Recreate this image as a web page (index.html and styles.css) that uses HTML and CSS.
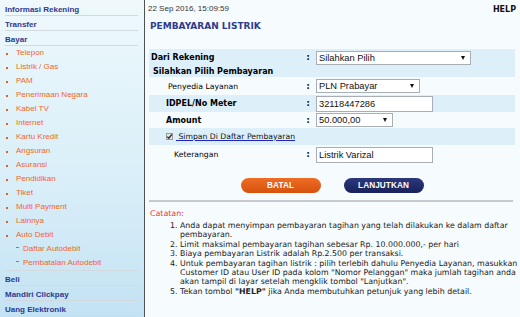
FILE: index.html
```html
<!DOCTYPE html>
<html lang="id">
<head>
<meta charset="utf-8">
<title>Pembayaran Listrik</title>
<link rel="stylesheet" href="styles.css">
</head>
<body>
<div class="page">
  <aside class="side">
    <ul class="menu">
      <li class="head">Informasi Rekening</li>
      <li class="head">Transfer</li>
      <li class="head">Bayar</li>
      <li>
        <ul class="sub">
          <li class="item">Telepon</li>
          <li class="item">Listrik / Gas</li>
          <li class="item">PAM</li>
          <li class="item">Penerimaan Negara</li>
          <li class="item">Kabel TV</li>
          <li class="item">Internet</li>
          <li class="item">Kartu Kredit</li>
          <li class="item">Angsuran</li>
          <li class="item">Asuransi</li>
          <li class="item">Pendidikan</li>
          <li class="item">Tiket</li>
          <li class="item">Multi Payment</li>
          <li class="item">Lainnya</li>
          <li class="item item-active">Auto Debit</li>
          <li class="subitem">Daftar Autodebit</li>
          <li class="subitem">Pembatalan Autodebit</li>
        </ul>
      </li>
      <li class="head">Beli</li>
      <li class="head">Mandiri Clickpay</li>
      <li class="head">Uang Elektronik</li>
    </ul>
  </aside>

  <main class="main">
    <div class="topbar">
      <span class="date">22 Sep 2016, 15:09:59</span>
      <span class="help">HELP</span>
    </div>
    <h1 class="title">PEMBAYARAN LISTRIK</h1>

    <div class="form">
      <div class="row band row-dari">
        <div class="label bold pad-dari">Dari Rekening</div>
        <div class="colon">:</div>
        <div class="value"><div class="select w-rek"><span>Silahkan Pilih</span><span class="arrow"></span></div></div>
      </div>
      <div class="row band row-section">
        <div class="label bold pad-section span-all">Silahkan Pilih Pembayaran</div>
      </div>
      <div class="row row-penyedia">
        <div class="label pad-penyedia">Penyedia Layanan</div>
        <div class="colon">:</div>
        <div class="value"><div class="select w-pln"><span>PLN Prabayar</span><span class="arrow"></span></div></div>
      </div>
      <div class="row band row-idpel">
        <div class="label bold pad-sub">IDPEL/No Meter</div>
        <div class="colon">:</div>
        <div class="value"><div class="input">32118447286</div></div>
      </div>
      <div class="row row-amount">
        <div class="label bold pad-sub">Amount</div>
        <div class="colon">:</div>
        <div class="value"><div class="select w-amt"><span>50.000,00</span><span class="arrow"></span></div></div>
      </div>
      <div class="row band row-simpan">
        <div class="label pad-sub span-all check-line">
          <span class="checkbox"><svg width="7" height="7" viewBox="0 0 7 7"><path d="M1.3 3.6 L2.9 5.2 L5.8 1.4" fill="none" stroke="#222" stroke-width="1.3"/></svg></span>
          <a class="link" href="#">&nbsp;Simpan Di Daftar Pembayaran</a>
        </div>
      </div>
      <div class="row row-ket">
        <div class="label pad-ket">Keterangan</div>
        <div class="colon">:</div>
        <div class="value"><div class="input">Listrik Varizal</div></div>
      </div>
    </div>

    <div class="actions">
      <span class="btn btn-batal">BATAL</span>
      <span class="btn btn-lanjut">LANJUTKAN</span>
    </div>

    <div class="rule"></div>

    <div class="note-title">Catatan:</div>
    <ol class="notes">
      <li>Anda dapat menyimpan pembayaran tagihan yang telah dilakukan ke dalam daftar<br>pembayaran.</li>
      <li>Limit maksimal pembayaran tagihan sebesar Rp. 10.000.000,- per hari</li>
      <li>Biaya pembayaran Listrik adalah Rp.2.500 per transaksi.</li>
      <li>Untuk pembayaran tagihan listrik : pilih terlebih dahulu Penyedia Layanan, masukkan<br>Customer ID atau User ID pada kolom "Nomor Pelanggan" maka jumlah tagihan anda<br>akan tampil di layar setelah mengklik tombol "Lanjutkan".</li>
      <li>Tekan tombol <b>"HELP"</b> jika Anda membutuhkan petunjuk yang lebih detail.</li>
    </ol>
  </main>
</div>
</body>
</html>
```

FILE: styles.css
```css
* { box-sizing: border-box; }
html, body { margin: 0; padding: 0; }
body {
  width: 520px;
  height: 317px;
  overflow: hidden;
  background: #f6fbfe;
  color: #000;
  font-family: "DejaVu Sans", Verdana, sans-serif;
  font-size: 8px;
}
.page { display: flex; height: 317px; }

/* ---------- sidebar ---------- */
.side {
  width: 145px;
  flex: none;
  padding-top: 1px;
  border-right: 1px solid #4c5258;
  background: linear-gradient(#eff9fc 0%, #e4f4fa 25%, #d8eef8 60%, #c3e2f3 100%);
  font-family: "Liberation Sans", Arial, sans-serif;
  font-size: 8px;
}
.menu, .sub { list-style: none; margin: 0; padding: 0; }
.head {
  height: 15px;
  margin: 0 6px 0 5px;
  padding-top: 4px;
  line-height: 10px;
  border-bottom: 1px solid #d2dadf;
  font-weight: bold;
  color: #2d3990;
}
.sub {
  margin: 0 6px 0 5px;
  border-bottom: 1px solid #d2dadf;
}
.item, .subitem {
  height: 14px;
  line-height: 14px;
  display: flex;
  align-items: center;
  color: #f0672a;
  white-space: nowrap;
}
.item { padding-left: 1px; }
.item::before {
  content: "";
  width: 2px;
  height: 2px;
  margin: 1px 8px 0 0;
  background: #e95f1c;
  flex: none;
}
.subitem { padding-left: 11px; }
.subitem::before {
  content: "";
  width: 3px;
  height: 1px;
  margin: 0 4px 4px 0;
  background: #e95f1c;
  flex: none;
}

/* ---------- main ---------- */
.main { flex: 1; min-width: 0; }
.topbar {
  height: 16px;
  display: flex;
  justify-content: space-between;
  align-items: center;
  padding: 1px 4px 0 3px;
}
.date { font-family: "Liberation Sans", Arial, sans-serif; font-size: 8px; color: #333; }
.help { font-weight: bold; font-size: 8px; color: #111; padding-top: 1px; }
.title {
  margin: 3px 0 0 5px;
  font-size: 9px;
  line-height: 14px;
  font-weight: bold;
  color: #2d3b8e;
}

.form { margin: 16px 5px 0 4px; }
.row {
  display: grid;
  grid-template-columns: 154px 10px 1fr;
  align-items: center;
}
.band { background: #ddf0fa; }
.row-dari { height: 16px; }
.row-section { height: 12px; }
.row-penyedia { height: 18px; }
.row-idpel { height: 17px; }
.row-amount { height: 16px; }
.row-simpan { height: 17px; }
.row-ket { height: 19px; }

.label { font-size: 7.7px; white-space: nowrap; }
.label.bold { font-size: 8px; font-weight: bold; }
.span-all { grid-column: 1 / -1; }
.pad-dari { padding-left: 2px; }
.pad-section { padding-left: 4px; }
.pad-penyedia { padding-left: 19px; }
.pad-sub { padding-left: 17px; }
.pad-ket { padding-left: 25px; }
.colon { text-align: center; font-weight: bold; font-size: 8px; }
.value { padding-left: 3px; display: flex; }

.select, .input {
  background: #fff;
  border: 1px solid #a7aeb5;
  font-family: "Liberation Sans", Arial, sans-serif;
  font-size: 9.3px;
  color: #111;
  display: flex;
  align-items: center;
  white-space: nowrap;
}
.select {
  height: 14px;
  justify-content: space-between;
  padding: 0 5px 0 2px;
}
.input { height: 16px; width: 117px; padding: 0 2px; }
.w-rek { width: 155px; }
.w-pln { width: 104px; }
.w-amt { width: 77px; }
.arrow {
  width: 0;
  height: 0;
  border-left: 2.5px solid transparent;
  border-right: 2.5px solid transparent;
  border-top: 4px solid #111;
}
.row-dari .select { margin-top: 1px; }
.row-ket .input { margin-top: 1px; }

.check-line { display: flex; align-items: center; }
.checkbox {
  width: 7px;
  height: 7px;
  margin-top: -1px;
  background: #e6e6e6;
  box-shadow: inset 0 0 0 1px #9a9a9a;
  display: flex;
}
.link {
  color: #111;
  font-size: 7.7px;
  text-decoration: underline;
  text-decoration-color: #1d24c8;
  margin-left: 3px;
}

.actions {
  display: flex;
  justify-content: center;
  gap: 23px;
  margin: 14px 5px 0 4px;
}
.btn {
  width: 80px;
  height: 15px;
  border-radius: 8px;
  display: flex;
  align-items: center;
  justify-content: center;
  color: #fff;
  font-family: "Liberation Sans", Arial, sans-serif;
  font-size: 8.2px;
  font-weight: bold;
  letter-spacing: 0.1px;
}
.btn-batal { background: linear-gradient(#ee6c24, #d4520c); }
.btn-lanjut { background: linear-gradient(#2b387c, #18215c); }

.rule {
  height: 2px;
  margin: 7px 7px 0 4px;
  background: #c6cacf;
}
.note-title {
  margin: 7px 0 0 5px;
  line-height: 10px;
  font-size: 7.9px;
  color: #ea363c;
}
.notes {
  margin: 2px 0 0 0;
  padding-left: 35px;
  font-size: 7.85px;
  line-height: 9.4px;
  color: #222;
  white-space: nowrap;
}
```
